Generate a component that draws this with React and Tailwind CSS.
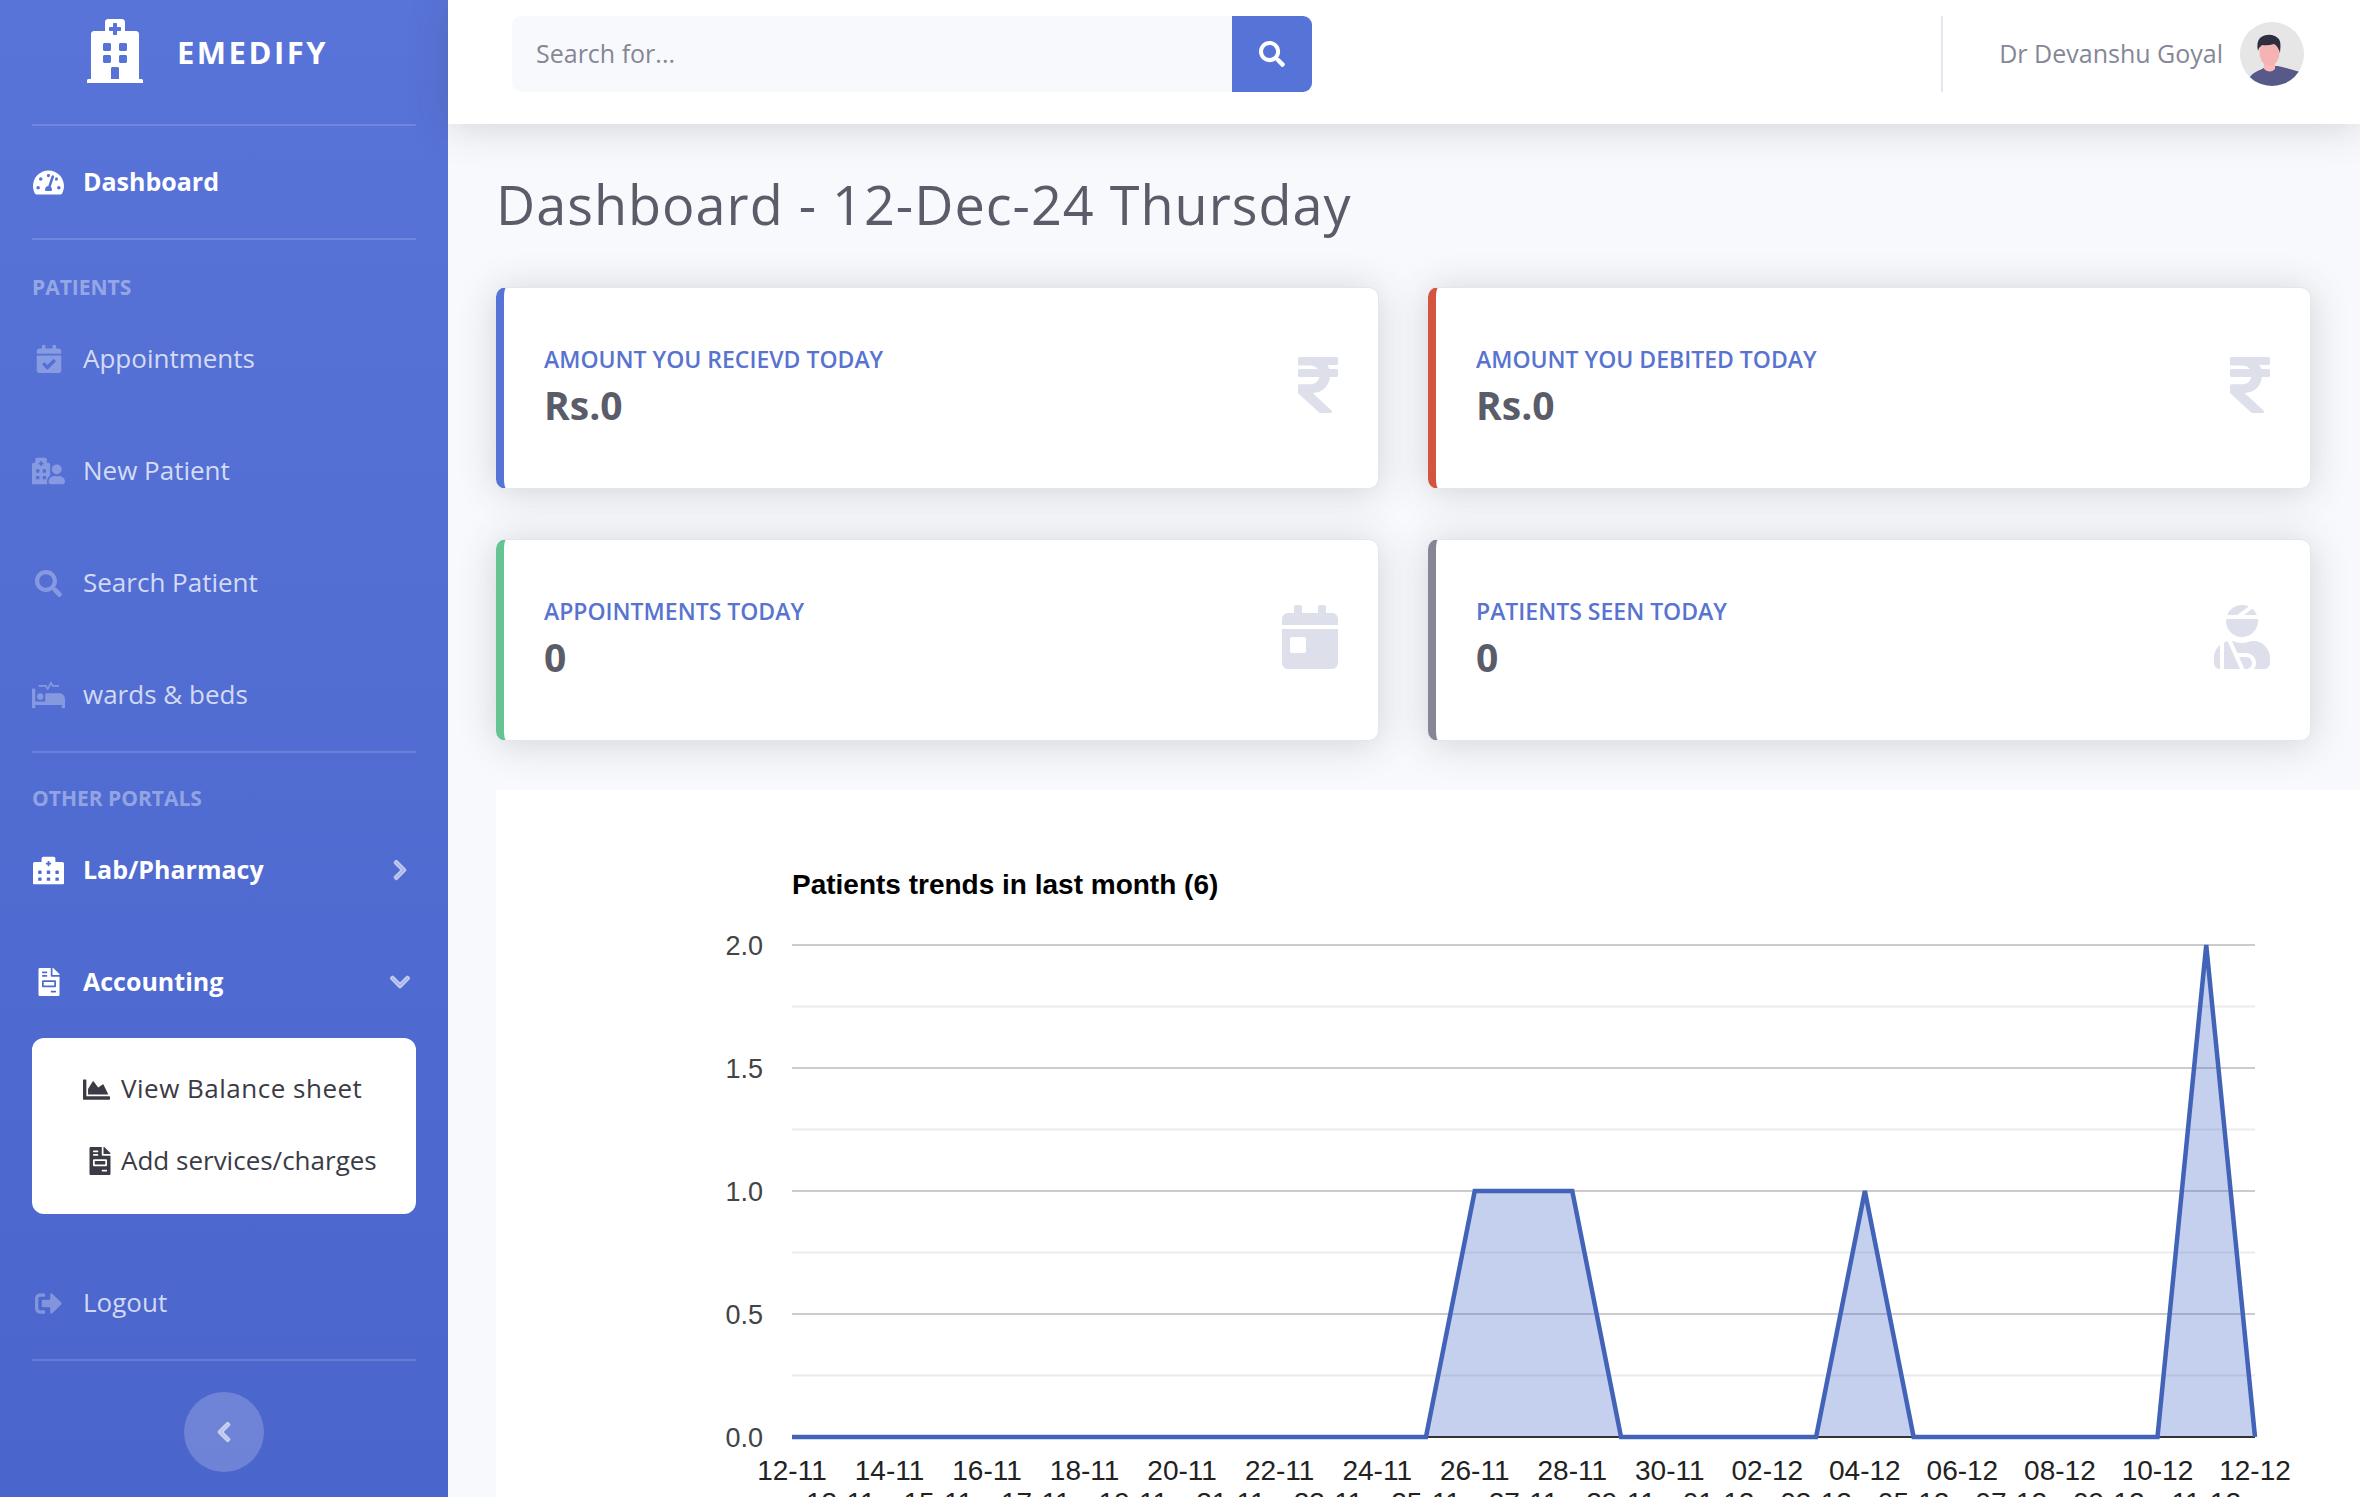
import React from "react";
import {
  FaHospital, FaTachometerAlt, FaCalendarCheck, FaHospitalUser, FaSearch, FaProcedures,
  FaHospitalAlt, FaFileInvoice, FaChevronRight, FaChevronDown, FaChartArea, FaSignOutAlt,
  FaChevronLeft, FaRupeeSign, FaCalendarDay, FaUserInjured,
} from "react-icons/fa";

const Hr = () => <div className="h-[2px] mx-[32px] bg-white/15" />;

function NavItem({ icon: Icon, label, active, chevron, iconSize = 29 }) {
  return (
    <div className={`h-[112px] pl-[32px] pr-[37px] flex items-center ${active ? "text-[25px] font-bold text-white" : "text-[26px] text-white/75"}`}>
      <span className="w-[51px] flex items-center justify-start">
        <span className={`w-[33px] flex justify-center ${active ? "text-white" : "text-white/30"}`}>
          <Icon size={iconSize} />
        </span>
      </span>
      <span className={`flex-1 ${active ? "" : "pb-[2px]"}`}>{label}</span>
      {chevron === "right" && <FaChevronRight size={22} strokeWidth={36} stroke="currentColor" className="text-white/50" />}
      {chevron === "down" && <FaChevronDown size={22} strokeWidth={36} stroke="currentColor" className="text-white/50" />}
    </div>
  );
}

function Heading({ children, className }) {
  return <div className={`px-[32px] text-[21px] leading-[24px] font-bold text-white/40 uppercase ${className}`}>{children}</div>;
}

function Sidebar() {
  return (
    <aside className="w-[448px] h-[1497px] shrink-0 bg-gradient-to-b from-[#5874d9] to-[#4a65cb] flex flex-col">
      <div className="h-[124px] pl-[83px] pt-[19px] flex items-start">
        <FaHospital size={64} className="text-white" />
        <span className="ml-[30px] mt-[12px] text-[31px] leading-[42px] font-bold tracking-[2.5px] text-white">EMEDIFY</span>
      </div>
      <Hr />
      <NavItem icon={FaTachometerAlt} label="Dashboard" active iconSize={31} />
      <Hr />
      <Heading className="pt-[35px] pb-[4px]">Patients</Heading>
      <NavItem icon={FaCalendarCheck} label="Appointments" iconSize={28} />
      <NavItem icon={FaHospitalUser} label="New Patient" iconSize={34} />
      <NavItem icon={FaSearch} label="Search Patient" iconSize={27} />
      <NavItem icon={FaProcedures} label="wards & beds" iconSize={34} />
      <Hr />
      <Heading className="pt-[33px] pb-[4px]">Other Portals</Heading>
      <NavItem icon={FaHospitalAlt} label="Lab/Pharmacy" active chevron="right" iconSize={31} />
      <NavItem icon={FaFileInvoice} label="Accounting" active chevron="down" iconSize={28} />
      <div className="mx-[32px] mb-[33px] pt-[15px] pb-[17px] rounded-[12px] bg-white text-[#3a3b45] text-[26px]">
        <div className="h-[72px] pl-[51px] flex items-center">
          <span className="w-[38px]"><FaChartArea size={27} /></span>
          <span className="tracking-[0.5px] pb-[2px]">View Balance sheet</span>
        </div>
        <div className="h-[72px] pl-[51px] flex items-center">
          <span className="w-[38px] pl-[3px]"><FaFileInvoice size={28} /></span>
          <span className="pb-[2px]">Add services/charges</span>
        </div>
      </div>
      <NavItem icon={FaSignOutAlt} label="Logout" iconSize={27} />
      <Hr />
      <div className="mt-[31px] flex justify-center">
        <button className="w-[80px] h-[80px] rounded-full bg-white/20 flex items-center justify-center text-white/50">
          <FaChevronLeft size={22} strokeWidth={36} stroke="currentColor" />
        </button>
      </div>
    </aside>
  );
}

function Avatar() {
  return (
    <svg width="64" height="64" viewBox="0 0 64 64" className="ml-[17px] shrink-0">
      <defs>
        <clipPath id="av"><circle cx="32" cy="32" r="32" /></clipPath>
      </defs>
      <g clipPath="url(#av)">
        <rect width="64" height="64" fill="#e6e6e6" />
        <path d="M4 70 L10 55 Q12 51 22 47 L27 44 H33 L38 44 Q50 47 60 50 L62 70 Z" fill="#575a89" />
        <path d="M24 37 H35 V47 Q30 52 24 47 Z" fill="#ffb8b8" />
        <ellipse cx="29.5" cy="30" rx="10" ry="14" fill="#f5b3b3" />
        <path d="M18 29 Q16 20 20 16 Q25 12 32 13 Q41 15 40.5 24 L40 31 Q38 24 34 22 Q28 24 22 23 Q19 25 18 29 Z" fill="#2f2e41" />
      </g>
    </svg>
  );
}

function Topbar() {
  return (
    <header className="h-[124px] shrink-0 bg-white flex items-center shadow-[0_3px_38px_rgba(58,59,69,0.2)] relative z-10 pl-[64px] pr-[56px] pb-[16px]">
      <div className="w-[800px] h-[76px] flex rounded-[9px] overflow-hidden bg-[#f8f9fc]">
        <div className="flex-1 pl-[24px] flex items-center text-[25px] text-[#858796]">Search for...</div>
        <div className="w-[80px] bg-[#5673d8] flex items-center justify-center text-white">
          <FaSearch size={26} />
        </div>
      </div>
      <div className="ml-auto w-[2px] h-[76px] bg-[#e3e6f0]" />
      <span className="ml-[56px] text-[25px] text-[#858796]">Dr Devanshu Goyal</span>
      <Avatar />
    </header>
  );
}

function Card({ border, label, value, Icon, iconClass }) {
  return (
    <div className={`h-[202px] rounded-[10px] border border-[#e3e6f0] border-l-[8px] ${border} bg-white shadow-[0_3px_38px_rgba(58,59,69,0.2)] pl-[40px] pr-[40px] flex items-center justify-between`}>
      <div className="mb-[3px]">
        <div className="text-[23px] leading-[28px] font-semibold uppercase text-[#5873d0]">{label}</div>
        <div className="mt-[9px] text-[39px] leading-[46px] font-bold text-[#5a5c69]">{value}</div>
      </div>
      <Icon size={64} className={`mb-[6px] text-[#dddfeb] ${iconClass}`} />
    </div>
  );
}

const X0 = 792;
const DX = (2255 - 792) / 30;
const px = (i) => X0 + i * DX;
const Y = (v) => 1437 - v * 246;
const labels = ["12-11","13-11","14-11","15-11","16-11","17-11","18-11","19-11","20-11","21-11","22-11","23-11","24-11","25-11","26-11","27-11","28-11","29-11","30-11","01-12","02-12","03-12","04-12","05-12","06-12","07-12","08-12","09-12","10-12","11-12","12-12"];
const values = labels.map(() => 0);
values[14] = 1; values[15] = 1; values[16] = 1; values[22] = 1; values[29] = 2;

function Chart() {
  const pts = values.map((v, i) => `${px(i)},${Y(v)}`).join(" ");
  const area = `${px(0)},${Y(0)} ${pts} ${px(30)},${Y(0)}`;
  return (
    <svg viewBox="496 790 1864 707" width="1864" height="707" className="block" style={{ fontFamily: '"Liberation Sans", Arial, sans-serif' }}>
      <text x="792" y="894" fontSize="28" fontWeight="700" fill="#000">Patients trends in last month (6)</text>
      {[1.75, 1.25, 0.75, 0.25].map((v) => (
        <line key={v} x1={X0} x2={2255} y1={Y(v)} y2={Y(v)} stroke="#ebebeb" strokeWidth="2" />
      ))}
      {[2, 1.5, 1, 0.5].map((v) => (
        <line key={v} x1={X0} x2={2255} y1={Y(v)} y2={Y(v)} stroke="#cccccc" strokeWidth="2" />
      ))}
      {[2, 1.5, 1, 0.5, 0].map((v) => (
        <text key={v} x="763" y={Y(v) + 10} fontSize="27" textAnchor="end" fill="#444444">{v.toFixed(1)}</text>
      ))}
      <polygon points={area} fill="#4066c6" fillOpacity="0.31" />
      <line x1={X0} x2={2255} y1={Y(0)} y2={Y(0)} stroke="#333333" strokeWidth="2" />
      <polyline points={pts} fill="none" stroke="#4263b8" strokeWidth="4.5" strokeLinejoin="miter" />
      {labels.map((l, i) => (
        <text key={l} x={px(i)} y={i % 2 === 0 ? 1480 : 1512} fontSize="28" textAnchor="middle" fill="#222222">{l}</text>
      ))}
    </svg>
  );
}

export default function App() {
  return (
    <div className="w-[2360px] h-[1497px] overflow-hidden flex bg-[#f8f9fc] [font-family:'Open_Sans',Lato,sans-serif]">
      <Sidebar />
      <main className="flex-1 min-w-0 flex flex-col">
        <Topbar />
        <div className="pl-[48px] pt-[44px] flex flex-col">
          <h1 className="h-[72px] text-[54px] leading-[72px] font-normal tracking-[1px] text-[#5a5c69]">Dashboard - 12-Dec-24 Thursday</h1>
          <div className="mt-[47px] mr-[49px] grid grid-cols-2 gap-x-[49px] gap-y-[50px]">
            <Card border="border-l-[#5673d8]" label="Amount you recievd today" value="Rs.0" Icon={FaRupeeSign} iconClass="-mr-[12px]" />
            <Card border="border-l-[#d3553f]" label="Amount you debited today" value="Rs.0" Icon={FaRupeeSign} iconClass="-mr-[12px]" />
            <Card border="border-l-[#66c492]" label="Appointments today" value="0" Icon={FaCalendarDay} iconClass="-mr-[4px]" />
            <Card border="border-l-[#858796]" label="Patients seen today" value="0" Icon={FaUserInjured} iconClass="-mr-[4px]" />
          </div>
          <div className="mt-[49px] bg-white">
            <Chart />
          </div>
        </div>
      </main>
    </div>
  );
}
